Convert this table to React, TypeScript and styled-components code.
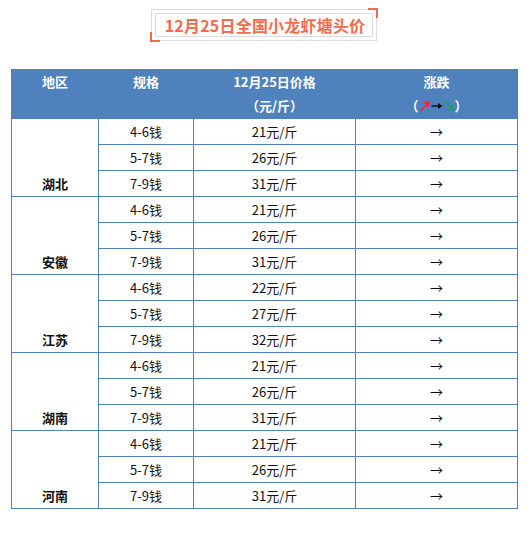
import React from "react";
import styled, { createGlobalStyle } from "styled-components";

const GlobalStyle = createGlobalStyle`
  body {
    margin: 0;
    background: #fff;
    font-family: "Noto Sans CJK SC", "Liberation Sans", sans-serif;
  }
`;

const Page = styled.div`
  width: 530px;
  padding-top: 9px;
  box-sizing: border-box;
`;

const TitleRow = styled.div`
  display: flex;
  justify-content: center;
  padding-right: 2px;
`;

const TitleFrame = styled.div`
  position: relative;
  border: 1px solid #dcdcdc;
  padding: 3px;

  &::before,
  &::after {
    content: "";
    position: absolute;
    width: 8px;
    height: 8px;
    border: 0 solid #f4694b;
  }

  &::before {
    top: -2px;
    right: -2px;
    border-top-width: 2px;
    border-right-width: 2px;
  }

  &::after {
    bottom: -2px;
    left: -2px;
    border-bottom-width: 2px;
    border-left-width: 2px;
  }
`;

const TitleInner = styled.div`
  border: 1px solid #dcdcdc;
  width: 214px;
  height: 22px;
  display: flex;
  align-items: center;
  justify-content: center;
  padding-left: 2px;
  color: #f76b4c;
  font-weight: bold;
  font-size: 16px;
  line-height: 22px;
  letter-spacing: 0.2px;
`;

const Table = styled.table`
  margin: 28px 0 0 11px;
  width: 506px;
  border-collapse: collapse;
  table-layout: fixed;
  font-size: 13px;
  color: #111;
`;

const Col = styled.col<{ $w: number }>`
  width: ${(p) => p.$w}px;
`;

const HeadCell = styled.th`
  background: #4f81bd;
  color: #fff;
  font-weight: bold;
  font-size: 13px;
  line-height: 24px;
  padding: 0;
  vertical-align: top;
  text-align: center;
  border: 1px solid #4f81bd;
`;

const TrendLegend = styled.span`
  display: inline-flex;
  align-items: center;
  gap: 0;
  vertical-align: top;
`;

const Cell = styled.td`
  height: 25px;
  padding: 0;
  text-align: center;
  vertical-align: middle;
  line-height: 25px;
  border: 1px solid #4f81bd;
`;

const RegionCell = styled(Cell)`
  vertical-align: bottom;
  font-weight: bold;
`;

const specs = ["4-6钱", "5-7钱", "7-9钱"];

const regions: { name: string; prices: number[] }[] = [
  { name: "湖北", prices: [21, 26, 31] },
  { name: "安徽", prices: [21, 26, 31] },
  { name: "江苏", prices: [22, 27, 32] },
  { name: "湖南", prices: [21, 26, 31] },
  { name: "河南", prices: [21, 26, 31] },
];

function UpArrow() {
  return (
    <svg width="12" height="12" viewBox="0 0 12 12">
      <path d="M1.5 11 L10 2.5" stroke="#ff1f3d" strokeWidth="1.6" />
      <path d="M4.5 2 L10.5 1.5 L10 7.5 Z" fill="#ff1f3d" />
    </svg>
  );
}

function FlatArrow() {
  return (
    <svg width="12" height="12" viewBox="0 0 12 12">
      <path d="M0.5 6 L8 6" stroke="#000" strokeWidth="1.3" />
      <path d="M7 3 L11.5 6 L7 9 Z" fill="#000" />
    </svg>
  );
}

function DownArrow() {
  return (
    <svg width="12" height="12" viewBox="0 0 12 12">
      <path d="M1.5 1 L10 9.5" stroke="#1ba35c" strokeWidth="1.6" />
      <path d="M4.5 10 L10.5 10.5 L10 4.5 Z" fill="#1ba35c" />
    </svg>
  );
}

export default function App(): JSX.Element {
  return (
    <Page>
      <GlobalStyle />
      <TitleRow>
        <TitleFrame>
          <TitleInner>12月25日全国小龙虾塘头价</TitleInner>
        </TitleFrame>
      </TitleRow>
      <Table>
        <colgroup>
          <Col $w={87} />
          <Col $w={95} />
          <Col $w={162} />
          <Col $w={162} />
        </colgroup>
        <thead>
          <tr>
            <HeadCell>地区</HeadCell>
            <HeadCell>规格</HeadCell>
            <HeadCell>
              12月25日价格
              <br />
              （元/斤）
            </HeadCell>
            <HeadCell>
              涨跌
              <br />
              <TrendLegend>
                （<UpArrow />
                <FlatArrow />
                <DownArrow />）
              </TrendLegend>
            </HeadCell>
          </tr>
        </thead>
        <tbody>
          {regions.map((r) =>
            specs.map((s, i) => (
              <tr key={r.name + s}>
                {i === 0 && <RegionCell rowSpan={3}>{r.name}</RegionCell>}
                <Cell>{s}</Cell>
                <Cell>{r.prices[i]}元/斤</Cell>
                <Cell>→</Cell>
              </tr>
            ))
          )}
        </tbody>
      </Table>
    </Page>
  );
}
